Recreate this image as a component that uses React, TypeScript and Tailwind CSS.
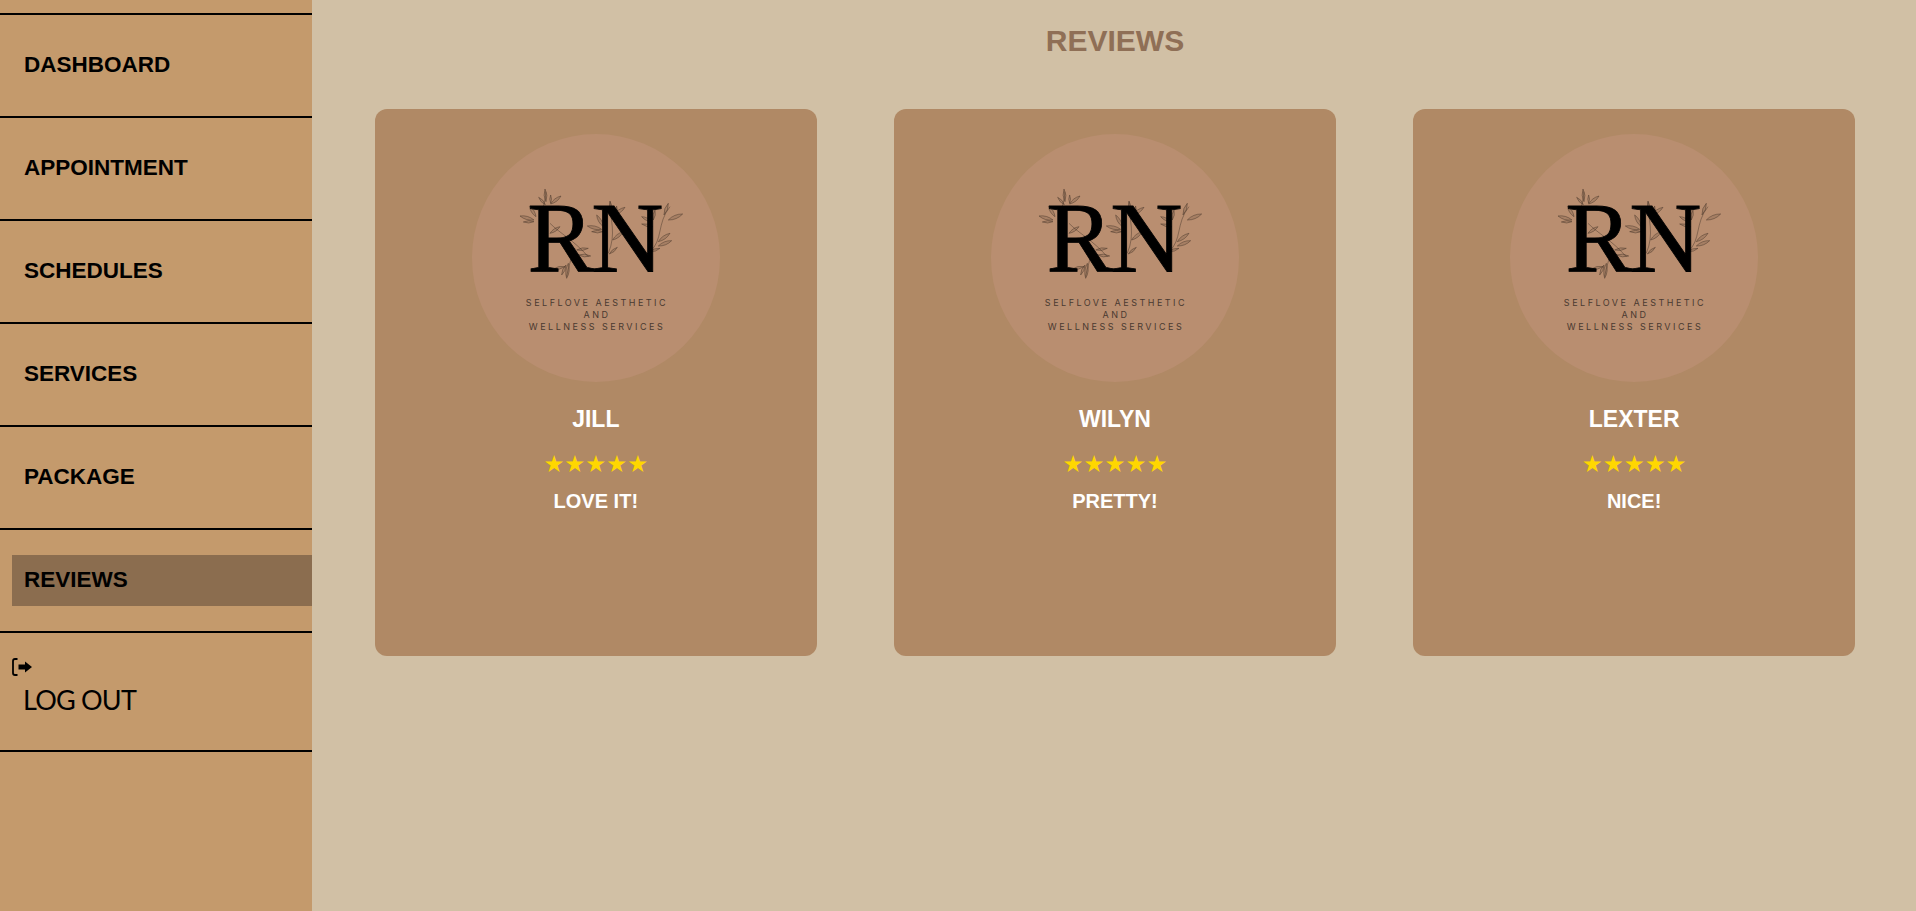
import React from 'react';

const menu = ['DASHBOARD', 'APPOINTMENT', 'SCHEDULES', 'SERVICES', 'PACKAGE', 'REVIEWS'];

const reviews = [
  { name: 'JILL', comment: 'LOVE IT!' },
  { name: 'WILYN', comment: 'PRETTY!' },
  { name: 'LEXTER', comment: 'NICE!' },
];

// [tipX, tipY, baseX, baseY]
const leaves = [
  [255, 207, 258, 245], [236, 232, 256, 254], [303, 228, 272, 252], [272, 225, 272, 250],
  [180, 288, 222, 300], [190, 306, 222, 305], [208, 258, 228, 290],
  [300, 320, 270, 340], [392, 408, 355, 405], [385, 385, 350, 390], [320, 475, 325, 430],
  [280, 447, 315, 440], [305, 465, 318, 435],
  [450, 243, 455, 280], [495, 262, 462, 285], [470, 258, 468, 285], [382, 318, 425, 328],
  [395, 335, 430, 335], [410, 285, 430, 320], [490, 335, 458, 360], [472, 382, 448, 402],
  [625, 250, 612, 285], [668, 282, 625, 300], [545, 290, 575, 305], [545, 312, 578, 320],
  [585, 270, 580, 300], [630, 340, 595, 365], [635, 362, 595, 378], [600, 385, 570, 395],
];

const stems = [
  'M245 320 C235 290 255 260 258 215',
  'M270 310 C300 340 340 360 385 410',
  'M345 385 C335 410 325 440 320 470',
  'M445 400 C470 340 450 300 450 245',
  'M570 395 C610 360 590 310 630 260',
];

const leafPath = ([tx, ty, bx, by]: number[]) => {
  const mx = (tx + bx) / 2;
  const my = (ty + by) / 2;
  const nx = (by - ty) * 0.22;
  const ny = (tx - bx) * 0.22;
  return `M${bx} ${by} Q${mx + nx} ${my + ny} ${tx} ${ty} Q${mx - nx} ${my - ny} ${bx} ${by} Z`;
};

const Logo = () => (
  <svg viewBox="0 0 248 248" className="w-[248px] h-[248px] block">
    <circle cx="124" cy="124" r="124" fill="#b98e70" />
    <g transform="scale(0.3333) translate(-36 -42)" fill="#3a2c22" fillOpacity="0.15" stroke="#3a2c22" strokeWidth="1.8" strokeOpacity="0.7">
      {stems.map((d) => <path key={d} d={d} fill="none" />)}
      {leaves.map((l, i) => <path key={i} d={leafPath(l)} />)}
    </g>
    <text x="122" y="137" textAnchor="middle" fontFamily="'Liberation Serif', serif" fontSize="100" fill="#000" stroke="#000" strokeWidth="0.8" letterSpacing="-3">RN</text>
    <g fontFamily="Inter, sans-serif" fontSize="9" fill="#4a3a30" textAnchor="middle" letterSpacing="2.5">
      <text x="125" y="172">SELFLOVE AESTHETIC</text>
      <text x="125" y="184">AND</text>
      <text x="125" y="196">WELLNESS SERVICES</text>
    </g>
  </svg>
);

const LogoutIcon = () => (
  <svg viewBox="0 0 20 18" className="ml-3 w-5 h-[18px] block">
    <path d="M5.5 1 H3 Q1 1 1 3 V15 Q1 17 3 17 H5.5" fill="none" stroke="#000" strokeWidth="1.8" />
    <path d="M6.5 6.5 H13 V3.5 L20 9 L13 14.5 V11.5 H6.5 Z" fill="#000" />
  </svg>
);

export default function App() {
  return (
    <div className="flex h-[911px] overflow-hidden bg-[#d1c0a5] font-['Liberation_Sans',Arial,sans-serif]">
      {/* Sidebar */}
      <aside className="w-[312px] shrink-0 bg-[#c49a6c] pt-[13px]">
        <ul className="border-t-2 border-black">
          {menu.map((item) => (
            <li key={item} className="border-b-2 border-black py-[25px]">
              <div className={`h-[51px] ml-3 pl-3 pb-[2px] flex items-center text-[22.5px] font-bold text-black ${item === 'REVIEWS' ? 'bg-[#8b6d4f]' : ''}`}>
                {item}
              </div>
            </li>
          ))}
          <li className="border-b-2 border-black h-[119px] pt-[25px]">
            <LogoutIcon />
            <div className="ml-[23px] mt-[8px] text-[27px] leading-8 tracking-[-0.8px] text-black font-['Lato',sans-serif]">LOG OUT</div>
          </li>
        </ul>
      </aside>

      {/* Content */}
      <main className="flex-1 pl-[63px] pr-[61px]">
        <h1 className="pt-[23px] text-center text-[30px] leading-[36px] font-bold text-[#8f6f56]">REVIEWS</h1>
        <div className="mt-[50px] grid grid-cols-3 gap-x-[77.5px]">
          {reviews.map((r) => (
            <div key={r.name} className="h-[547px] rounded-xl bg-[#b08965] pt-[25px] flex flex-col items-center text-white">
              <Logo />
              <div className="mt-[23px] text-[23px] leading-[28px] font-bold">{r.name}</div>
              <div className="mt-[17px] text-[23.4px] leading-[28px] text-[#ffd700] font-['DejaVu_Sans',sans-serif]">★★★★★</div>
              <div className="mt-[11px] text-[20px] leading-[24px] font-bold">{r.comment}</div>
            </div>
          ))}
        </div>
      </main>
    </div>
  );
}
